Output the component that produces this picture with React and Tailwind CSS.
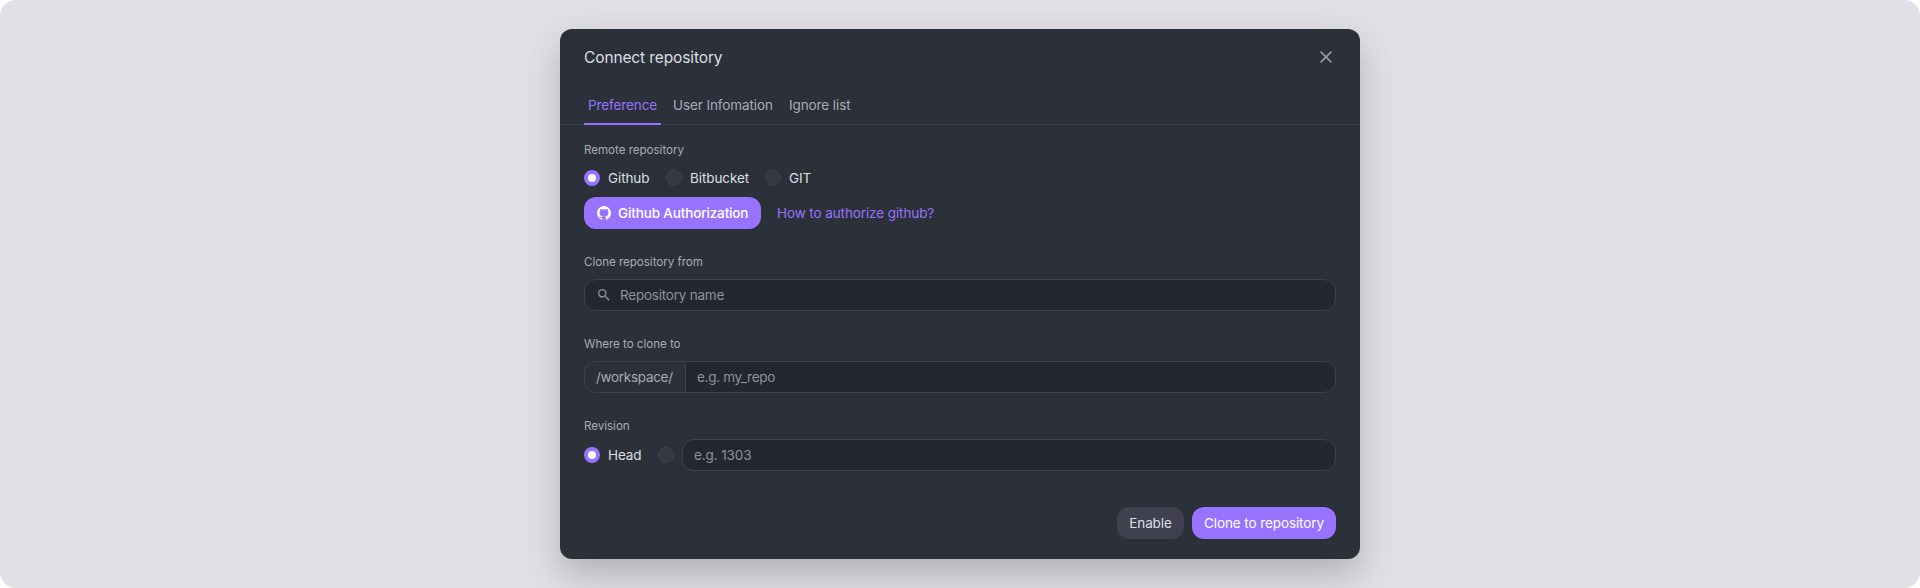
import { MdSearch } from 'react-icons/md';

const Radio = ({ checked }) => (
  <span
    className={
      checked
        ? 'flex size-4 shrink-0 items-center justify-center rounded-full bg-[#9873ff]'
        : 'size-4 shrink-0 rounded-full border border-[#3f424e] bg-[#353841]'
    }
  >
    {checked && <span className="size-2 rounded-full bg-white" />}
  </span>
);

const Option = ({ checked, className = '', children }) => (
  <label className={`flex h-4 items-center gap-2 whitespace-nowrap ${className}`}>
    <Radio checked={checked} />
    <span>{children}</span>
  </label>
);

const Label = ({ children }) => (
  <div className="text-[11.6px] leading-4 tracking-[-0.03px] text-[#a9abb6]">{children}</div>
);

const GithubIcon = () => (
  <svg viewBox="0 0 16 16" className="size-4 shrink-0" fill="currentColor">
    <path d="M8 1a7 7 0 0 0-2.2 13.65c.35.06.48-.15.48-.34v-1.2c-1.95.42-2.36-.94-2.36-.94-.32-.8-.78-1.02-.78-1.02-.63-.43.05-.42.05-.42.7.05 1.07.72 1.07.72.63 1.07 1.64.76 2.04.58.06-.45.24-.76.44-.93-1.55-.18-3.19-.78-3.19-3.46 0-.77.27-1.39.72-1.88-.07-.18-.31-.9.07-1.86 0 0 .59-.19 1.93.71a6.7 6.7 0 0 1 3.5 0c1.33-.9 1.92-.71 1.92-.71.38.96.14 1.68.07 1.86.45.49.72 1.11.72 1.88 0 2.69-1.64 3.28-3.2 3.45.25.22.48.64.48 1.3v1.92c0 .19.12.4.48.34A7 7 0 0 0 8 1z" />
  </svg>
);

const CloseIcon = () => (
  <svg viewBox="0 0 16 16" className="size-4" fill="none" stroke="currentColor" strokeWidth="1.5">
    <path d="M2.6 2.6 13.4 13.4M13.4 2.6 2.6 13.4" />
  </svg>
);

export default function App() {
  return (
    <div className="bg-white">
      <div className="flex h-[588px] items-start justify-center overflow-hidden rounded-2xl bg-[#e0e1e6] pt-[29px] font-[Inter,sans-serif] text-[13.5px] leading-5 tracking-[-0.1px] text-[#dcdee5]">
        <section className="h-[530px] w-[800px] rounded-xl bg-[#2c3039] shadow-[0_16px_36px_rgba(60,45,60,0.28)]">
          <header className="flex h-14 items-center justify-between pr-[26px] pl-6">
            <h1 className="pt-0.5 text-[15.5px] leading-6 tracking-[-0.12px]">Connect repository</h1>
            <button className="text-[#9a9cab]"><CloseIcon /></button>
          </header>
          <nav className="flex h-10 items-stretch gap-2 border-b border-[#3f424e] px-6 text-[#a9abb6]">
            <span className="-mb-px w-[77px] border-b-2 border-[#9873ff] px-1 pt-[10px] text-[#9873ff]">Preference</span>
            <span className="w-[108px] px-1 pt-[10px]">User Infomation</span>
            <span className="px-1 pt-[10px]">Ignore list</span>
          </nav>
          <main className="px-6 pt-[17px]">
            <Label>Remote repository</Label>
            <div className="mt-3 flex gap-4">
              <Option checked className="w-[66px]">Github</Option>
              <Option className="w-[83px]">Bitbucket</Option>
              <Option>GIT</Option>
            </div>
            <div className="mt-[11px] flex items-center gap-4">
              <button className="flex h-8 w-[177px] items-center gap-1.5 rounded-xl bg-[#9873ff] px-3 font-medium tracking-[-0.14px] whitespace-nowrap text-white">
                <GithubIcon />
                Github Authorization
              </button>
              <a className="text-[#9873ff]">How to authorize github?</a>
            </div>
            <div className="mt-[25px]"><Label>Clone repository from</Label></div>
            <div className="mt-[9px] flex h-8 items-center gap-2 rounded-xl border border-[#3f424e] bg-[#23272f] px-[11px] tracking-[-0.22px] text-[#8f919d]">
              <MdSearch className="size-4" />
              <span>Repository name</span>
            </div>
            <div className="mt-[25px]"><Label>Where to clone to</Label></div>
            <div className="mt-[9px] flex h-8 items-stretch leading-[30px] tracking-[-0.3px] text-[#8f919d]">
              <span className="w-[101px] rounded-l-xl border border-r-0 border-[#3f424e] pl-[11px] text-[#a9abb6]">/workspace/</span>
              <span className="flex-1 rounded-r-xl border border-[#3f424e] bg-[#23272f] px-[11px]">e.g. my_repo</span>
            </div>
            <div className="mt-[25px]"><Label>Revision</Label></div>
            <div className="mt-[5px] flex h-8 items-center">
              <Option checked className="w-[58px]">Head</Option>
              <span className="mr-2 ml-4 flex"><Radio /></span>
              <div className="flex h-8 flex-1 items-center rounded-xl border border-[#3f424e] bg-[#23272f] px-[11px] text-[#8f919d]">e.g. 1303</div>
            </div>
          </main>
          <footer className="mt-9 flex justify-end gap-2 px-6">
            <button className="h-8 w-[67px] rounded-xl bg-[#3f424e]">Enable</button>
            <button className="h-8 w-36 rounded-xl bg-[#9873ff] text-white">Clone to repository</button>
          </footer>
        </section>
      </div>
    </div>
  );
}
